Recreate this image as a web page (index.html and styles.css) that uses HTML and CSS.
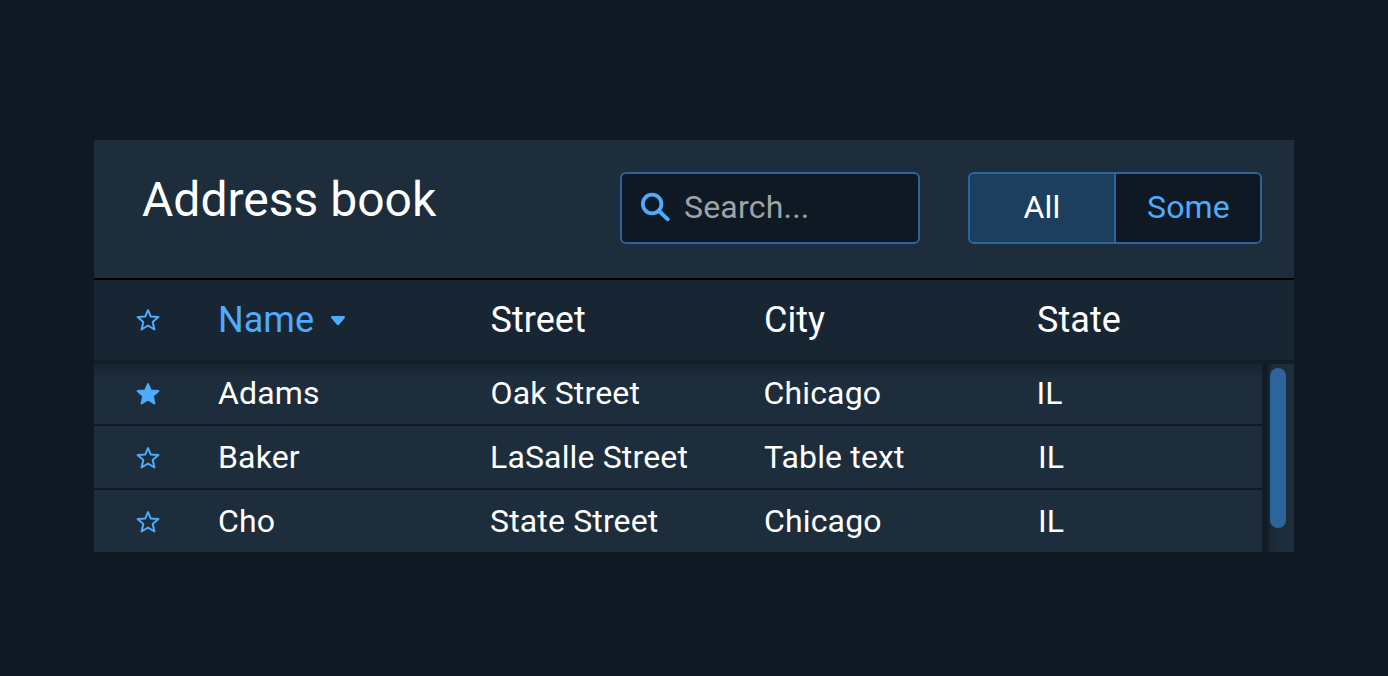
FILE: index.html
```html
<!DOCTYPE html>
<html lang="en">
<head>
<meta charset="utf-8">
<title>Address book</title>
<link rel="stylesheet" href="styles.css">
</head>
<body>
<svg width="0" height="0" class="defs">
  <symbol id="star" viewBox="0 0 24 24"><path d="M12 2.1l2.7 6.3 7.7.7-5.7 4.9 1.7 7.5L12 17.5l-6.4 4 1.7-7.5L1.6 9.1l7.7-.7z"/></symbol>
</svg>
<main class="card">
  <header class="card-header">
    <h1 class="title">Address book</h1>
    <div class="search">
      <svg class="search-icon" viewBox="0 0 30 30"><circle cx="11.1" cy="12" r="9.3"/><path d="M18 19l8.8 8.3"/></svg>
      <span class="placeholder">Search...</span>
    </div>
    <div class="segmented">
      <button class="segment segment-on">All</button>
      <button class="segment">Some</button>
    </div>
  </header>
  <div class="row head">
    <svg class="star"><use href="#star"/></svg>
    <span class="sorted">Name<svg class="caret" viewBox="0 0 14 10"><path d="M1.4 0h11.2c1.4 0 1.8 1.4.9 2.3L8 8.7c-.6.6-1.4.6-2 0L.5 2.3C-.4 1.4 0 0 1.4 0z"/></svg></span>
    <span>Street</span>
    <span>City</span>
    <span>State</span>
  </div>
  <div class="body">
    <div class="rows">
      <div class="row first">
        <svg class="star star-full"><use href="#star"/></svg>
        <span>Adams</span><span>Oak Street</span><span>Chicago</span><span>IL</span>
      </div>
      <div class="row">
        <svg class="star"><use href="#star"/></svg>
        <span>Baker</span><span>LaSalle Street</span><span>Table text</span><span>IL</span>
      </div>
      <div class="row">
        <svg class="star"><use href="#star"/></svg>
        <span>Cho</span><span>State Street</span><span>Chicago</span><span>IL</span>
      </div>
    </div>
    <div class="track"><div class="thumb"></div></div>
  </div>
</main>
</body>
</html>
```
FILE: styles.css
```css
* { box-sizing: border-box; }
body {
  margin: 0;
  height: 676px;
  padding: 140px 94px 0;
  background: #0f1923;
  color: #fff;
  font-family: Roboto, sans-serif;
  overflow: hidden;
}
.defs { display: none; }
.card { width: 1200px; }
.card-header {
  display: flex;
  align-items: flex-start;
  height: 140px;
  padding: 32px 32px 0 48px;
  background: #1d2d3c;
  border-bottom: 2px solid #000;
}
.title {
  margin: 0;
  flex: 1;
  font-size: 48px;
  font-weight: 400;
  line-height: 56px;
}
.search {
  display: flex;
  align-items: center;
  width: 300px;
  height: 72px;
  margin-right: 48px;
  padding: 0 19px 2px;
  background: #0f1923;
  border: 2px solid #2b659b;
  border-radius: 6px;
}
.search-icon {
  width: 30px;
  height: 30px;
  margin-right: 13px;
  fill: none;
  stroke: #4dacff;
  stroke-width: 3.8;
  stroke-linecap: round;
}
.placeholder {
  font-size: 32px;
  letter-spacing: 0.2px;
  color: #9fa3a9;
}
.segmented {
  display: flex;
  width: 294px;
  height: 72px;
  border: 2px solid #2b659b;
  border-radius: 6px;
  overflow: hidden;
}
.segment {
  flex: 1;
  padding: 0 0 2px 1px;
  border: 0;
  background: #0f1923;
  color: #4dacff;
  font: 400 32px Roboto, sans-serif;
  letter-spacing: 0.15px;
}
.segment-on {
  flex: 0 0 147px;
  padding-left: 0;
  background: #1c3f5e;
  border-right: 2px solid #2b659b;
  color: #fff;
}
.segment-on { flex-basis: 146px; }
.row {
  display: grid;
  grid-template-columns: 82px 272px 274px 274px 1fr;
  align-items: center;
  height: 62px;
  padding-left: 42px;
  background: #1d2d3c;
  font-size: 32px;
  letter-spacing: 0.15px;
}
.rows { width: 1168px; }
.row + .row { height: 64px; border-top: 2px solid #101923; }
.row + .row .star { margin-top: 2px; }
.row.head {
  grid-template-columns: 82px 272.5px 273.5px 273px 1fr;
  height: 80px;
  background: #182634;
  font-size: 36px;
  letter-spacing: 0.05px;
}
.star {
  width: 24px;
  height: 24px;
  fill: none;
  stroke: #4dacff;
  stroke-width: 2;
  stroke-linejoin: round;
}
.star-full { fill: #4dacff; }
.sorted { color: #4dacff; }
.caret { width: 14px; height: 10px; margin-left: 17px; fill: #4dacff; vertical-align: 6px; }
.body {
  display: flex;
  justify-content: space-between;
  height: 192px;
  border-top: 4px solid #121d26;
}
.row.first {
  grid-template-columns: 82px 272.5px 273px 273px 1fr;
  height: 60px;
  background: linear-gradient(#17232f, #1d2d3c 14px);
}
.row.first span { padding-bottom: 2px; }
.track {
  width: 32px;
  padding: 4px 8px;
  background: linear-gradient(90deg, #121c26 5px, #1a2836 8px, #1d2d3c 16px);
}
.thumb { width: 16px; height: 160px; border-radius: 8px; background: #2b659b; }
```
